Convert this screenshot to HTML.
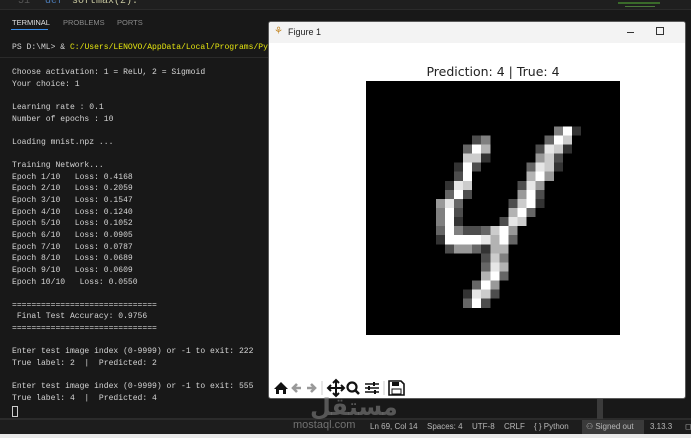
<!DOCTYPE html>
<html><head><meta charset="utf-8"><style>
*{margin:0;padding:0;box-sizing:border-box}
body{width:691px;height:438px;overflow:hidden;background:#181818;position:relative;font-family:"Liberation Sans",sans-serif}
.ed{position:absolute;left:0;top:0;width:691px;height:10px;background:#1f1f1f;border-bottom:1px solid #2b2b2b;overflow:hidden}
.ed span{position:absolute;top:-4px;font:10px "Liberation Mono",monospace}
.tabs{position:absolute;top:18px;font-size:7.5px;color:#8a8a8a;letter-spacing:0}
.term{position:absolute;left:12px;top:0;font:8.05px/11.64px "Liberation Mono","DejaVu Sans Mono",monospace;color:#d4d4d4;white-space:pre}
.win{position:absolute;left:268px;top:21px;width:418px;height:378px;background:#fff;border:1px solid #5a5a5a;border-radius:3px;overflow:hidden}
.tb{height:21px;background:#f3f3f3;position:relative}
.status{position:absolute;left:0;top:419px;width:691px;height:15px;background:#1d1d1d;border-top:1px solid #2b2b2b;font-size:8px;color:#b8b8b8}
.status span{position:absolute;top:2px}
</style></head><body>
<div class="ed"><span style="left:18px;color:#555">51</span><span style="left:45px;color:#4a7ab5">def</span><span style="left:72px;color:#c9c9a0">softmax(z):</span>
<div style="position:absolute;left:618px;top:2px;width:42px;height:2px;background:#3a6a2a"></div><div style="position:absolute;left:625px;top:6px;width:30px;height:1px;background:#4a7a3a"></div></div>
<div class="tabs" style="left:12px;color:#e0e0e0">TERMINAL</div>
<div style="position:absolute;left:11px;top:29px;width:37px;height:1px;background:#3b8eea"></div>
<div class="tabs" style="left:63px">PROBLEMS</div>
<div class="tabs" style="left:117px">PORTS</div>
<div class="term" style="top:42px">PS D:\ML&gt; &amp; <span style="color:#e5e510">C:/Users/LENOVO/AppData/Local/Programs/Py</span></div>
<div style="position:absolute;left:0;top:57px;width:268px;height:1px;background:#2a2a2a"></div>
<div class="term" style="top:67px">Choose activation: 1 = ReLU, 2 = Sigmoid
Your choice: 1

Learning rate : 0.1
Number of epochs : 10

Loading mnist.npz ...

Training Network...
Epoch 1/10   Loss: 0.4168
Epoch 2/10   Loss: 0.2059
Epoch 3/10   Loss: 0.1547
Epoch 4/10   Loss: 0.1240
Epoch 5/10   Loss: 0.1052
Epoch 6/10   Loss: 0.0905
Epoch 7/10   Loss: 0.0787
Epoch 8/10   Loss: 0.0689
Epoch 9/10   Loss: 0.0609
Epoch 10/10   Loss: 0.0550

==============================
 Final Test Accuracy: 0.9756
==============================

Enter test image index (0-9999) or -1 to exit: 222
True label: 2  |  Predicted: 2

Enter test image index (0-9999) or -1 to exit: 555
True label: 4  |  Predicted: 4
</div>
<div style="position:absolute;left:12px;top:406px;width:6px;height:11px;border:1px solid #ccc"></div>
<div style="position:absolute;left:0;top:418px;width:691px;height:1px;background:#2b2b2b"></div>
<div style="position:absolute;left:597px;top:399px;width:6px;height:20px;background:#3a3a3a"></div>

<div class="win">
<div class="tb"><span style="position:absolute;left:5px;top:4px;font-size:10px;color:#c58a2a">⚘</span><span style="position:absolute;left:19px;top:5px;font-size:9px;color:#222">Figure 1</span>
<div style="position:absolute;left:358px;top:10px;width:7px;height:1px;background:#333"></div>
<div style="position:absolute;left:387px;top:5px;width:8px;height:8px;border:1px solid #333"></div></div>
<div style="position:absolute;left:0;top:42px;width:418px;text-align:center;font:12.5px 'DejaVu Sans',sans-serif;color:#222;padding-left:30px">Prediction: 4 | True: 4</div>
<svg style="position:absolute;left:97px;top:59px" width="254" height="254" viewBox="0 0 28 28" shape-rendering="crispEdges">
<rect width="28" height="28" fill="#000"/>
<g fill="#fff" transform="translate(-0.3 0)">
<rect x="21" y="5" width="1" height="1" fill-opacity=".5"/><rect x="22" y="5" width="1" height="1"/><rect x="23" y="5" width="1" height="1" fill-opacity=".2"/>
<rect x="12" y="6" width="1" height="1" fill-opacity=".3"/><rect x="13" y="6" width="1" height="1" fill-opacity=".5"/><rect x="20" y="6" width="1" height="1" fill-opacity=".4"/><rect x="21" y="6" width="1" height="1"/><rect x="22" y="6" width="1" height="1" fill-opacity=".8"/>
<rect x="11" y="7" width="1" height="1" fill-opacity=".4"/><rect x="12" y="7" width="1" height="1"/><rect x="13" y="7" width="1" height="1" fill-opacity=".7"/><rect x="19" y="7" width="1" height="1" fill-opacity=".3"/><rect x="20" y="7" width="1" height="1" fill-opacity=".9"/><rect x="21" y="7" width="1" height="1" fill-opacity=".8"/><rect x="22" y="7" width="1" height="1" fill-opacity=".2"/>
<rect x="11" y="8" width="1" height="1" fill-opacity=".8"/><rect x="12" y="8" width="1" height="1" fill-opacity=".8"/><rect x="13" y="8" width="1" height="1" fill-opacity=".2"/><rect x="19" y="8" width="1" height="1" fill-opacity=".6"/><rect x="20" y="8" width="1" height="1" fill-opacity=".8"/><rect x="21" y="8" width="1" height="1" fill-opacity=".3"/>
<rect x="10" y="9" width="1" height="1" fill-opacity=".2"/><rect x="11" y="9" width="1" height="1"/><rect x="12" y="9" width="1" height="1" fill-opacity=".3"/><rect x="18" y="9" width="1" height="1" fill-opacity=".4"/><rect x="19" y="9" width="1" height="1" fill-opacity=".9"/><rect x="20" y="9" width="1" height="1" fill-opacity=".8"/><rect x="21" y="9" width="1" height="1" fill-opacity=".2"/>
<rect x="10" y="10" width="1" height="1" fill-opacity=".3"/><rect x="11" y="10" width="1" height="1"/><rect x="18" y="10" width="1" height="1" fill-opacity=".7"/><rect x="19" y="10" width="1" height="1"/><rect x="20" y="10" width="1" height="1" fill-opacity=".6"/>
<rect x="9" y="11" width="1" height="1" fill-opacity=".2"/><rect x="10" y="11" width="1" height="1" fill-opacity=".9"/><rect x="11" y="11" width="1" height="1" fill-opacity=".8"/><rect x="17" y="11" width="1" height="1" fill-opacity=".3"/><rect x="18" y="11" width="1" height="1" fill-opacity=".9"/><rect x="19" y="11" width="1" height="1" fill-opacity=".6"/>
<rect x="9" y="12" width="1" height="1" fill-opacity=".4"/><rect x="10" y="12" width="1" height="1"/><rect x="11" y="12" width="1" height="1" fill-opacity=".3"/><rect x="17" y="12" width="1" height="1" fill-opacity=".6"/><rect x="18" y="12" width="1" height="1"/><rect x="19" y="12" width="1" height="1" fill-opacity=".3"/>
<rect x="8" y="13" width="1" height="1" fill-opacity=".6"/><rect x="9" y="13" width="1" height="1" fill-opacity=".9"/><rect x="10" y="13" width="1" height="1" fill-opacity=".4"/><rect x="16" y="13" width="1" height="1" fill-opacity=".3"/><rect x="17" y="13" width="1" height="1" fill-opacity=".8"/><rect x="18" y="13" width="1" height="1"/><rect x="19" y="13" width="1" height="1" fill-opacity=".2"/>
<rect x="8" y="14" width="1" height="1" fill-opacity=".5"/><rect x="9" y="14" width="1" height="1"/><rect x="10" y="14" width="1" height="1" fill-opacity=".3"/><rect x="16" y="14" width="1" height="1" fill-opacity=".7"/><rect x="17" y="14" width="1" height="1"/><rect x="18" y="14" width="1" height="1" fill-opacity=".4"/>
<rect x="8" y="15" width="1" height="1" fill-opacity=".5"/><rect x="9" y="15" width="1" height="1"/><rect x="10" y="15" width="1" height="1" fill-opacity=".2"/><rect x="15" y="15" width="1" height="1" fill-opacity=".3"/><rect x="16" y="15" width="1" height="1" fill-opacity=".9"/><rect x="17" y="15" width="1" height="1" fill-opacity=".8"/>
<rect x="8" y="16" width="1" height="1" fill-opacity=".4"/><rect x="9" y="16" width="1" height="1"/><rect x="10" y="16" width="1" height="1" fill-opacity=".5"/><rect x="11" y="16" width="1" height="1" fill-opacity=".3"/><rect x="12" y="16" width="1" height="1" fill-opacity=".3"/><rect x="13" y="16" width="1" height="1" fill-opacity=".4"/><rect x="14" y="16" width="1" height="1" fill-opacity=".8"/><rect x="15" y="16" width="1" height="1"/><rect x="16" y="16" width="1" height="1" fill-opacity=".6"/>
<rect x="8" y="17" width="1" height="1" fill-opacity=".2"/><rect x="9" y="17" width="4" height="1"/><rect x="13" y="17" width="1" height="1" fill-opacity=".9"/><rect x="14" y="17" width="1" height="1" fill-opacity=".7"/><rect x="15" y="17" width="1" height="1"/><rect x="16" y="17" width="1" height="1" fill-opacity=".4"/>
<rect x="9" y="18" width="1" height="1" fill-opacity=".3"/><rect x="10" y="18" width="2" height="1" fill-opacity=".6"/><rect x="12" y="18" width="1" height="1" fill-opacity=".4"/><rect x="13" y="18" width="1" height="1" fill-opacity=".2"/><rect x="14" y="18" width="2" height="1" fill-opacity=".7"/>
<rect x="13" y="19" width="1" height="1" fill-opacity=".3"/><rect x="14" y="19" width="1" height="1" fill-opacity=".8"/><rect x="15" y="19" width="1" height="1" fill-opacity=".5"/>
<rect x="13" y="20" width="1" height="1" fill-opacity=".4"/><rect x="14" y="20" width="1" height="1" fill-opacity=".9"/><rect x="15" y="20" width="1" height="1" fill-opacity=".7"/>
<rect x="13" y="21" width="1" height="1" fill-opacity=".7"/><rect x="14" y="21" width="1" height="1"/><rect x="15" y="21" width="1" height="1" fill-opacity=".4"/>
<rect x="12" y="22" width="1" height="1" fill-opacity=".4"/><rect x="13" y="22" width="1" height="1"/><rect x="14" y="22" width="1" height="1" fill-opacity=".6"/>
<rect x="11" y="23" width="1" height="1" fill-opacity=".2"/><rect x="12" y="23" width="1" height="1" fill-opacity=".9"/><rect x="13" y="23" width="1" height="1" fill-opacity=".8"/><rect x="14" y="23" width="1" height="1" fill-opacity=".3"/>
<rect x="11" y="24" width="1" height="1" fill-opacity=".4"/><rect x="12" y="24" width="1" height="1"/><rect x="13" y="24" width="1" height="1" fill-opacity=".3"/>
</g></svg>
<svg style="position:absolute;left:3px;top:356px" width="150" height="20" viewBox="0 0 150 20">
<path d="M2 11 L9 4 L16 11 L14 11 L14 16 L11 16 L11 12 L7 12 L7 16 L4 16 L4 11Z" fill="#111"/>
<path d="M29 10 H22 M25 6 L21 10 L25 14" stroke="#999" stroke-width="2.6" fill="none"/>
<path d="M35 10 H42 M39 6 L43 10 L39 14" stroke="#999" stroke-width="2.6" fill="none"/>
<line x1="50" y1="3" x2="50" y2="17" stroke="#ccc"/>
<path d="M64 2 V18 M56 10 H72 M61 5 L64 2 L67 5 M61 15 L64 18 L67 15 M59 7 L56 10 L59 13 M69 7 L72 10 L69 13" stroke="#111" stroke-width="2" fill="none"/>
<circle cx="80" cy="9" r="4.5" stroke="#111" stroke-width="2.2" fill="none"/><path d="M83 12 L87 16" stroke="#111" stroke-width="2.6"/>
<path d="M93 6 H107 M93 10 H107 M93 14 H107" stroke="#111" stroke-width="1.5"/><path d="M102 4 V8 M97 8 V12 M103 12 V16" stroke="#111" stroke-width="2"/>
<line x1="112" y1="3" x2="112" y2="17" stroke="#ccc"/>
<path d="M117 3 H129 L132 6 V17 H117Z" stroke="#111" stroke-width="1.6" fill="none"/><rect x="120" y="4" width="7" height="4" fill="#111"/><rect x="120" y="11" width="9" height="5" stroke="#111" fill="none"/>
</svg>
</div>

<div style="position:absolute;left:310px;top:393px;font:bold 24px 'DejaVu Sans',sans-serif;color:rgba(140,140,140,.55)">مستقل</div>
<div class="status">
<span style="left:293px;font-size:11px;top:-1px;color:rgba(150,150,150,.7)">mostaql.com</span>
<span style="left:370px">Ln 69, Col 14</span><span style="left:427px">Spaces: 4</span><span style="left:472px">UTF-8</span><span style="left:504px">CRLF</span><span style="left:534px">{ } Python</span>
<span style="left:582px;top:0;height:14px;width:62px;background:#3a3a3a"></span><span style="left:586px">⚇ Signed out</span><span style="left:650px">3.13.3</span><span style="left:685px">◻</span>
</div>
<div style="position:absolute;left:0;top:434px;width:691px;height:4px;background:#e9e9e9"></div>
</body></html>
